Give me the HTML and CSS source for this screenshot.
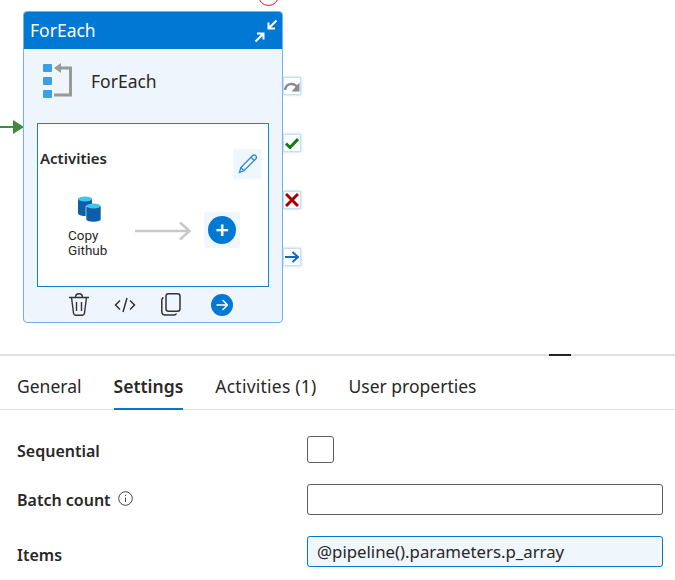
FILE: index.html
```html
<!DOCTYPE html>
<html lang="en">
<head>
  <meta charset="UTF-8">
  <title>ForEach settings</title>
  <link rel="stylesheet" href="styles.css">
</head>
<body>
  <!-- pipeline canvas -->
  <div class="canvas">
    <div class="badge-error"></div>
    <svg class="link-in" width="24" height="16" viewBox="0 0 24 16">
      <path d="M0 8h14" stroke="#3f8a3f" stroke-width="2"/>
      <path d="M13 1l11 7-11 7z" fill="#3f8a3f"/>
    </svg>

    <div class="node">
      <div class="node-head">
        <span>ForEach</span>
        <svg width="26" height="26" viewBox="0 0 26 26" fill="none" stroke="#fff" stroke-width="2">
          <path d="M23.500 2.500l-8 8M15.500 4.500v6h6.500"/>
          <path d="M2.500 23.500l8-8M10.500 21.500v-6h-6.500"/>
        </svg>
      </div>

      <div class="node-title">
        <svg width="29" height="38" viewBox="0 0 29 38">
          <rect x="0" y="2" width="9" height="8" rx="1" fill="#3b9fe8"/>
          <rect x="0" y="15" width="9" height="8" rx="1" fill="#3b9fe8"/>
          <rect x="0" y="28" width="9" height="8" rx="1" fill="#3b9fe8"/>
          <path d="M16 6h11.500v27H11" fill="none" stroke="#999" stroke-width="3"/>
          <path d="M18 1v10l-7-5z" fill="#999"/>
        </svg>
        <span>ForEach</span>
      </div>

      <div class="activities">
        <div class="activities-head">
          <span>Activities</span>
          <div class="icon-tile">
            <svg width="20" height="20" viewBox="0 0 20 20" fill="none" stroke="#2b88d8" stroke-width="1.300">
              <path d="M1.500 18.500l1.300-5L14.500 1.800a2 2 0 0 1 3.200 3.200L6 16.800z"/>
              <path d="M2.800 13.500l3.200 3.300M13 3.300l3.300 3.300"/>
            </svg>
          </div>
        </div>
        <div class="activities-body">
          <div class="copy-item">
            <svg width="24" height="26" viewBox="0 0 24 26">
              <path d="M1 3v14c0 2 3 3 7 3s7-1 7-3V3z" fill="#0c5ea8"/>
              <ellipse cx="8" cy="3" rx="7" ry="2.500" fill="#3fc6ea"/>
              <path d="M9 10v13c0 2 3 3 7.500 3s7.500-1 7.500-3V10z" fill="#0c5ea8" stroke="#fff" stroke-width=".6"/>
              <ellipse cx="16.500" cy="10" rx="7" ry="2.500" fill="#3fc6ea"/>
            </svg>
            <span>Copy<br>Github</span>
          </div>
          <svg class="flow-arrow" width="57" height="20" viewBox="0 0 57 20" fill="none" stroke="#c8c8c8" stroke-width="2.500">
            <path d="M0 10h54M45 1.500l9.500 8.500-9.500 8.500"/>
          </svg>
          <div class="add-tile">
            <div class="add-btn">+</div>
          </div>
        </div>
      </div>

      <div class="node-actions">
        <svg width="20" height="23" viewBox="0 0 20 23" fill="none" stroke="#333" stroke-width="1.400">
          <path d="M0 4.500h20M6.500 4.500c0-5 7-5 7 0M2.500 4.500l2 15.500c.2 1.500 1 2.200 2.500 2.200h6c1.500 0 2.300-.7 2.500-2.200l2-15.500M7.500 9v9M12.500 9v9"/>
        </svg>
        <svg width="22" height="16" viewBox="0 0 22 16" fill="none" stroke="#333" stroke-width="1.500">
          <path d="M6 3.500L1.500 8 6 12.500M16 3.500L20.500 8 16 12.500M13 1L9 15"/>
        </svg>
        <svg width="20" height="23" viewBox="0 0 20 23" fill="none" stroke="#333" stroke-width="1.500">
          <rect x="5" y=".8" width="14" height="17.500" rx="2.500"/>
          <path d="M2.500 4.500C1.200 5 .8 6 .8 7v11.500c0 2 1.500 3.500 3.500 3.500H13c1 0 2-.5 2.500-1.500"/>
        </svg>
        <div class="go-btn">
          <svg width="12" height="12" viewBox="0 0 12 12" fill="none" stroke="#fff" stroke-width="1.500">
            <path d="M0.500 6h10.500M6.500 1l5 5-5 5"/>
          </svg>
        </div>
      </div>
    </div>

    <div class="ports">
      <div class="port">
        <svg width="16" height="12" viewBox="0 0 16 12" fill="none" stroke="#8a8a8a" stroke-width="2.500">
          <path d="M1 10c1-7 9-8 13-2"/><path d="M15.500 2.500v9h-8z" fill="#8a8a8a" stroke="none"/>
        </svg>
      </div>
      <div class="port">
        <svg width="14" height="12" viewBox="0 0 14 12" fill="none" stroke="#107c10" stroke-width="3">
          <path d="M1 6.500l4 4L13 2"/>
        </svg>
      </div>
      <div class="port">
        <svg width="14" height="14" viewBox="0 0 14 14" fill="none" stroke="#a80000" stroke-width="3">
          <path d="M1 1l12 12M13 1L1 13"/>
        </svg>
      </div>
      <div class="port">
        <svg width="14" height="12" viewBox="0 0 14 12" fill="none" stroke="#0f6cbd" stroke-width="2">
          <path d="M0 6h12.500M7.500 1l5.500 5-5.500 5"/>
        </svg>
      </div>
    </div>
  </div>

  <!-- properties panel -->
  <div class="panel">
    <div class="drag-handle"></div>
    <div class="tabs">
      <div class="tab">General</div>
      <div class="tab active">Settings</div>
      <div class="tab tab-wide">Activities (1)</div>
      <div class="tab">User properties</div>
    </div>

    <div class="form">
      <div class="field-label label-sequential">Sequential</div>
      <div><div class="checkbox"></div></div>

      <div class="field-label label-batch">Batch count
        <svg class="info" width="15" height="15" viewBox="0 0 15 15" fill="none" stroke="#444">
          <circle cx="7.500" cy="7.500" r="6.800"/>
          <path d="M7.500 6.500v4.500M7.500 3.800v1.200"/>
        </svg>
      </div>
      <div><input class="text-input" type="text"></div>

      <div class="field-label label-items">Items</div>
      <div><input class="text-input filled" type="text" value="@pipeline().parameters.p_array"></div>
    </div>
  </div>
</body>
</html>
```

FILE: styles.css
```css
* {
  box-sizing: border-box;
}
html,
body {
  height: 100%;
}
body {
  margin: 0;
  background: #fff;
  color: #292827;
  font-family: "Noto Sans", "Open Sans", Arial, sans-serif;
  overflow: hidden;
}

/* canvas */
.canvas {
  position: relative;
  height: 354px;
}
.badge-error {
  position: absolute;
  left: 258px;
  top: -15px;
  width: 21px;
  height: 21px;
  border: 1.5px solid #e81123;
  border-radius: 50%;
}
.link-in {
  position: absolute;
  left: 0;
  top: 119px;
}
.node {
  position: absolute;
  left: 23px;
  top: 11px;
  width: 260px;
  height: 312px;
  display: flex;
  flex-direction: column;
  background: #eef5fc;
  border: 1px solid #6cb2eb;
  border-radius: 4px;
}
.node-head {
  height: 37px;
  flex: none;
  display: flex;
  align-items: center;
  justify-content: space-between;
  padding: 0 3px 2px 6px;
  background: #0078d4;
  color: #fff;
  font-size: 17.500px;
  border-radius: 3px 3px 0 0;
}
.node-head svg {
  margin-top: 2px;
}
.node-title {
  height: 74px;
  flex: none;
  display: flex;
  align-items: center;
  gap: 19px;
  padding: 0 0 10px 19px;
  font-size: 17.500px;
}
.activities {
  width: 232px;
  height: 164px;
  flex: none;
  margin-left: 13px;
  background: #fff;
  border: 1.500px solid #1a80d0;
  display: flex;
  flex-direction: column;
}
.activities-head {
  display: flex;
  justify-content: space-between;
  padding: 25px 6px 0 2px;
  font-size: 15px;
  font-weight: 600;
  line-height: 18px;
}
.icon-tile {
  width: 29px;
  height: 30px;
  display: flex;
  align-items: center;
  justify-content: center;
  background: #eff6fc;
  border-radius: 3px;
}
.activities-body {
  display: flex;
  align-items: flex-start;
  padding: 17px 0 0 30px;
}
.copy-item {
  width: 67px;
  display: flex;
  flex-direction: column;
  align-items: flex-start;
  font-family: Roboto, "Noto Sans", sans-serif;
  font-size: 13.500px;
  line-height: 15px;
}
.copy-item svg {
  margin: 0 0 6px 9px;
}
.flow-arrow {
  margin-top: 25px;
}
.add-tile {
  width: 36px;
  height: 36px;
  margin: 16px 0 0 12px;
  display: flex;
  align-items: center;
  justify-content: center;
  background: #eff6fc;
  border-radius: 3px;
}
.add-btn {
  width: 28px;
  height: 28px;
  background: #0078d4;
  border-radius: 50%;
  color: #fff;
  font-size: 24px;
  font-weight: 600;
  line-height: 27px;
  text-align: center;
}
.node-actions {
  flex: 1;
  display: flex;
  align-items: center;
  padding-left: 45px;
}
.node-actions svg:nth-child(2),
.node-actions svg:nth-child(3) {
  margin-left: 25px;
}
.go-btn {
  width: 22px;
  height: 22px;
  margin-left: 30px;
  display: flex;
  align-items: center;
  justify-content: center;
  background: #0078d4;
  border-radius: 50%;
}
.ports {
  position: absolute;
  left: 283px;
  top: 77px;
  display: flex;
  flex-direction: column;
  gap: 39px;
}
.port {
  width: 18px;
  height: 18px;
  display: flex;
  align-items: center;
  justify-content: center;
  background: #fff;
  border: 1px solid #c7e0f4;
  box-shadow: 0 0 2px #9cc9ee;
}

/* panel */
.panel {
  position: relative;
  border-top: 2px solid #e0e0e0;
}
.drag-handle {
  position: absolute;
  left: 549px;
  top: -2px;
  width: 22px;
  height: 2px;
  background: #252423;
}
.tabs {
  height: 54px;
  display: flex;
  gap: 32px;
  padding-left: 17px;
  border-bottom: 1px solid #e0e0e0;
  font-size: 17.500px;
}
.tab {
  height: 54px;
  padding-top: 18px;
  line-height: 24px;
}
.tab-wide {
  letter-spacing: .23px;
}
.tab.active {
  font-weight: 600;
  border-bottom: 2px solid #0078d4;
}
.form {
  display: grid;
  grid-template-columns: 290px 356px;
  grid-template-rows: 50px 50px 54px;
  align-items: center;
  padding: 14px 0 0 17px;
}
.field-label {
  font-size: 16px;
  font-weight: 600;
  display: flex;
  align-items: center;
  gap: 7px;
}
.label-sequential {
  margin-top: 4px;
}
.label-batch {
  margin-top: 2px;
}
.label-items {
  margin-top: 8px;
}
.info {
  margin-top: -4px;
}
.checkbox {
  width: 27px;
  height: 27px;
  background: #fff;
  border: 1px solid #605e5c;
  border-radius: 3px;
}
.text-input {
  display: block;
  width: 356px;
  height: 31px;
  padding: 0 9px;
  border: 1px solid #605e5c;
  border-radius: 3px;
  background: #fff;
  color: #292827;
  font-family: inherit;
  font-size: 16.800px;
  outline: none;
}
.text-input.filled {
  background: #eff6fc;
  border-color: #0078d4;
}
```
